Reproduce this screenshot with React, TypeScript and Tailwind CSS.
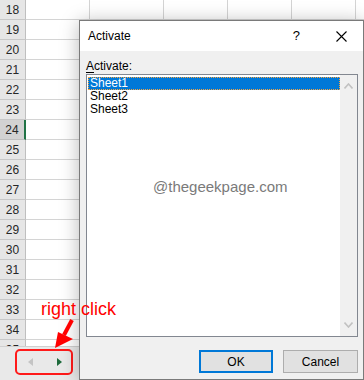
import React from "react";

const rows = Array.from({ length: 18 }, (_, i) => 18 + i);
const sheets = ["Sheet1", "Sheet2", "Sheet3"];

export default function App() {
  return (
    <div
      className="relative w-[364px] h-[380px] overflow-hidden bg-white flex flex-col text-[12px] text-black"
      style={{ fontFamily: '"Liberation Sans", Arial, sans-serif' }}
    >
      {/* sheet grid */}
      <div className="h-[346px] overflow-hidden flex flex-col">
        {rows.map((r) => (
          <div key={r} className="flex h-[20px] shrink-0">
            <div
              className={
                r === 24
                  ? "w-[26px] shrink-0 flex items-center justify-center bg-[#d2d2d2] border-b border-[#bfbfbf] border-r-2 border-r-[#217346] text-[#262626]"
                  : "w-[26px] shrink-0 flex items-center justify-center bg-[#e6e6e6] border-b border-[#c8c8c8] border-r border-r-[#bfbfbf] text-[#262626]"
              }
            >
              {r}
            </div>
            <div className="w-[64px] shrink-0 border-r border-b border-[#d4d4d4]" />
            <div className="w-[74px] shrink-0 border-r border-b border-[#d4d4d4]" />
            <div className="w-[64px] shrink-0 border-r border-b border-[#d4d4d4]" />
            <div className="w-[64px] shrink-0 border-r border-b border-[#d4d4d4]" />
            <div className="w-[64px] shrink-0 border-r border-b border-[#d4d4d4]" />
            <div className="flex-1 border-b border-[#d4d4d4]" />
          </div>
        ))}
      </div>

      {/* sheet tab bar */}
      <div className="flex-1 bg-[#e9e9e9] border-t border-[#d0d0d0] flex items-start">
        <div className="ml-[15px] mt-[2px] w-[58px] h-[26px] border-2 border-[#ff1a1a] rounded-[5px] flex items-center">
          <span className="ml-[11px] w-0 h-0 border-y-[4px] border-y-transparent border-r-[5px] border-r-[#c4c4c4]" />
          <span className="ml-[24px] w-0 h-0 border-y-[4px] border-y-transparent border-l-[5px] border-l-[#1e6b3c]" />
        </div>
      </div>

      {/* dialog */}
      <div className="absolute left-[79px] top-[20px] w-[285px] h-[360px] border border-[#7a7a7a] bg-[#f0f0f0] shadow-[0_2px_18px_rgba(0,0,0,0.28)] flex flex-col">
        <div className="h-[30px] bg-white flex items-center shrink-0">
          <span className="ml-[8px] flex-1">Activate</span>
          <span className="text-[13px] mr-[36px]">?</span>
          <svg className="mr-[16px]" width="11" height="11" viewBox="0 0 11 11">
            <path d="M0.5 0.5 L10.5 10.5 M10.5 0.5 L0.5 10.5" stroke="#000" strokeWidth="1.1" />
          </svg>
        </div>

        <div className="flex flex-col pl-[6px] pr-[5px] pt-[8px]">
          <div className="leading-[14px]">
            <span className="underline underline-offset-2">A</span>ctivate:
          </div>
          <div className="mt-[1px] w-[272px] h-[263px] border border-[#828790] bg-white flex">
            <div className="flex-1 pl-[1px] pt-[2px] flex flex-col">
              {sheets.map((s, i) => (
                <div
                  key={s}
                  className={
                    i === 0
                      ? "h-[13px] leading-[13px] pl-[2px] bg-[#0078d7] text-white outline outline-1 outline-dotted outline-[#f7a43f] -outline-offset-1"
                      : "h-[13px] leading-[13px] pl-[2px]"
                  }
                >
                  {s}
                </div>
              ))}
            </div>
            <div className="w-[17px] bg-[#f0f0f0] flex flex-col items-center justify-between py-[8px]">
              <svg width="9" height="6" viewBox="0 0 9 6">
                <path d="M0.5 5.5 L4.5 1 L8.5 5.5" stroke="#c2c2c2" strokeWidth="1.6" fill="none" />
              </svg>
              <svg width="9" height="6" viewBox="0 0 9 6">
                <path d="M0.5 0.5 L4.5 5 L8.5 0.5" stroke="#c2c2c2" strokeWidth="1.6" fill="none" />
              </svg>
            </div>
          </div>
          <div className="mt-[13px] flex justify-end gap-[10px]">
            <button className="w-[74px] h-[23px] border-2 border-[#0078d7] bg-[#e1e1e1] text-[12px]">
              OK
            </button>
            <button className="w-[75px] h-[23px] border border-[#adadad] bg-[#e1e1e1] text-[12px]">
              Cancel
            </button>
          </div>
        </div>
      </div>

      {/* watermark */}
      <span className="absolute left-[153px] top-[178px] text-[15px] leading-[18px] text-[#7a7a7a] whitespace-nowrap">
        @thegeekpage.com
      </span>

      {/* annotation */}
      <span className="absolute left-[41px] top-[298px] text-[18px] leading-[22px] text-[#ff0000] whitespace-nowrap">
        right click
      </span>
      <svg className="absolute left-[50px] top-[315px]" width="30" height="38" viewBox="0 0 30 38">
        <line x1="22" y1="5" x2="14" y2="20" stroke="#ff0000" strokeWidth="4" />
        <polygon points="5,33 8,17 23,24" fill="#ff0000" />
      </svg>
    </div>
  );
}
